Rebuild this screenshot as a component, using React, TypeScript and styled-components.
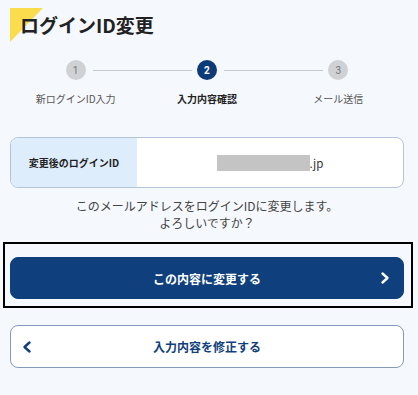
import styled, { createGlobalStyle } from 'styled-components';

const GlobalStyle = createGlobalStyle`
  html, body {
    margin: 0;
    padding: 0;
    background: #f5f8fc;
  }
  body {
    font-family: "Noto Sans CJK JP", "Noto Sans", sans-serif;
    color: #333;
  }
`;

const Page = styled.div`
  width: 418px;
  height: 395px;
  box-sizing: border-box;
  padding: 0 14px 0 10px;
  overflow: hidden;
`;

const Title = styled.h1`
  position: relative;
  z-index: 0;
  margin: 0;
  padding: 12px 0 0 10px;
  font-size: 19px;
  line-height: 26px;
  font-weight: 700;
  color: #222;

  &::before {
    content: '';
    position: absolute;
    left: 0;
    top: 8px;
    width: 33px;
    height: 34px;
    background: #fbdc4c;
    clip-path: polygon(0 0, 100% 0, 0 100%);
    z-index: -1;
  }
`;

const Steps = styled.ol`
  list-style: none;
  margin: 22px 0 0;
  padding: 0;
  display: grid;
  grid-template-columns: repeat(3, 1fr);
`;

const Step = styled.li`
  position: relative;
  display: flex;
  flex-direction: column;
  align-items: center;

  &:not(:last-child)::after {
    content: '';
    position: absolute;
    top: 10px;
    left: calc(50% + 17px);
    width: calc(100% - 32px);
    height: 1px;
    background: #c5cad1;
  }
`;

const Dot = styled.span<{ $active?: boolean }>`
  width: 20px;
  height: 20px;
  border-radius: 50%;
  display: flex;
  align-items: center;
  justify-content: center;
  font-family: "Roboto", "Noto Sans", sans-serif;
  font-size: 10px;
  font-weight: ${p => (p.$active ? 700 : 400)};
  color: ${p => (p.$active ? '#fff' : '#777')};
  background: ${p => (p.$active ? '#0d3b79' : '#cfd1d4')};
`;

const StepLabel = styled.span<{ $active?: boolean }>`
  margin-top: 12px;
  font-size: 10px;
  line-height: 14px;
  font-weight: ${p => (p.$active ? 700 : 400)};
  color: ${p => (p.$active ? '#222' : '#555')};
`;

const InfoBox = styled.div`
  margin-top: 31px;
  display: flex;
  height: 51px;
  border: 1px solid #b3c5dc;
  border-radius: 8px;
  overflow: hidden;
  background: #fff;
  box-sizing: border-box;
`;

const InfoLabel = styled.div`
  width: 126px;
  flex-shrink: 0;
  background: #deedfb;
  display: flex;
  align-items: center;
  justify-content: center;
  font-size: 10px;
  font-weight: 700;
  color: #222;
`;

const InfoValue = styled.div`
  flex: 1;
  display: flex;
  align-items: center;
  justify-content: center;
  font-size: 11.5px;
  color: #333;
`;

const Redacted = styled.span`
  display: inline-block;
  width: 93px;
  height: 16px;
  background: #c4c4c4;
`;

const Message = styled.p`
  margin: 9px 0 0;
  text-align: center;
  font-size: 12px;
  line-height: 17px;
  color: #444;
`;

const FocusFrame = styled.div`
  margin: 11px -9px 0 -7px;
  padding: 13px 7px 7px 5px;
  border: 2px solid #000;
`;

const Button = styled.button<{ $primary?: boolean }>`
  position: relative;
  width: 100%;
  height: ${p => (p.$primary ? '42px' : '43px')};
  border-radius: 8px;
  box-sizing: border-box;
  border: 1px solid ${p => (p.$primary ? '#0f3f7c' : '#8599b8')};
  background: ${p => (p.$primary ? '#0f3f7c' : '#fff')};
  color: ${p => (p.$primary ? '#fff' : '#0f3f7c')};
  font-family: inherit;
  font-size: 12px;
  font-weight: 700;
  display: flex;
  align-items: center;
  justify-content: center;
  cursor: pointer;
`;

const SecondButton = styled(Button)`
  margin-top: 17px;
`;

const Chevron = styled.svg<{ $side: 'left' | 'right' }>`
  position: absolute;
  top: 50%;
  transform: translateY(-50%);
  ${p => (p.$side === 'right' ? 'right: 12px;' : 'left: 10px;')}
  width: 12px;
  height: 14px;
`;

const steps = ['新ログインID入力', '入力内容確認', 'メール送信'];

export default function App() {
  return (
    <>
      <GlobalStyle />
      <Page>
        <Title>ログインID変更</Title>
        <Steps>
          {steps.map((label, i) => (
            <Step key={label}>
              <Dot $active={i === 1}>{i + 1}</Dot>
              <StepLabel $active={i === 1}>{label}</StepLabel>
            </Step>
          ))}
        </Steps>
        <InfoBox>
          <InfoLabel>変更後のログインID</InfoLabel>
          <InfoValue>
            <Redacted />
            .jp
          </InfoValue>
        </InfoBox>
        <Message>
          このメールアドレスをログインIDに変更します。
          <br />
          よろしいですか？
        </Message>
        <FocusFrame>
          <Button $primary>
            この内容に変更する
            <Chevron $side="right" viewBox="0 0 12 14">
              <path d="M3.5 2.5 L8.5 7 L3.5 11.5" fill="none" stroke="#fff" strokeWidth="2.4" strokeLinecap="round" strokeLinejoin="round" />
            </Chevron>
          </Button>
        </FocusFrame>
        <SecondButton>
          入力内容を修正する
          <Chevron $side="left" viewBox="0 0 12 14">
            <path d="M8.5 2.5 L3.5 7 L8.5 11.5" fill="none" stroke="#0f3f7c" strokeWidth="2.4" strokeLinecap="round" strokeLinejoin="round" />
          </Chevron>
        </SecondButton>
      </Page>
    </>
  );
}
